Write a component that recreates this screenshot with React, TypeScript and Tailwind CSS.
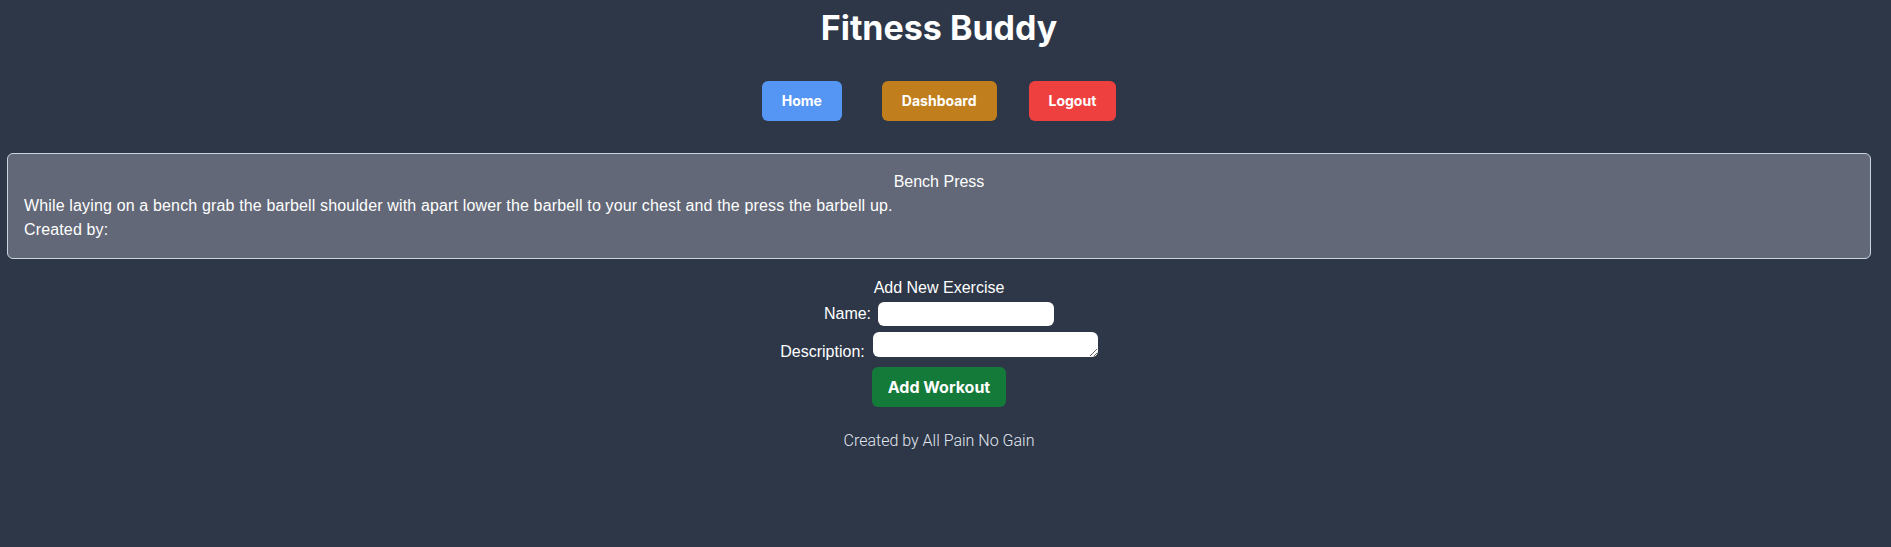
import React from 'react';

const exercises = [
  {
    name: 'Bench Press',
    description:
      'While laying on a bench grab the barbell shoulder with apart lower the barbell to your chest and the press the barbell up.',
    createdBy: '',
  },
];

export default function App() {
  return (
    <div className="min-h-screen bg-[#2d3748] text-white font-['Inter',sans-serif]">
      <div className="w-[1878px] flex flex-col items-center">
        <h1 className="mt-2 text-[34px] font-bold leading-10">Fitness Buddy</h1>

        <nav className="mt-[33px] flex items-center">
          <a className="mr-[40px] rounded-md bg-[#5596f5] px-5 py-2.5 text-sm font-bold leading-5">Home</a>
          <a className="mr-[32px] rounded-md bg-[#c07f1c] px-5 py-2.5 text-sm font-bold leading-5">Dashboard</a>
          <a className="rounded-md bg-[#ef4040] px-5 py-2.5 text-sm font-bold leading-5">Logout</a>
        </nav>

        <div className="mt-8 w-full px-[7px] font-['Liberation_Sans',Arial,sans-serif]">
          {exercises.map((ex) => (
            <div key={ex.name} className="rounded-md border border-[#cbd5e0] bg-[#626877] p-4 text-base leading-6">
              <h2 className="text-center">{ex.name}</h2>
              <p className="tracking-[0.15px]">{ex.description}</p>
              <p className="tracking-[0.15px]">Created by: {ex.createdBy}</p>
            </div>
          ))}
        </div>

        <form className="mt-[17px] flex flex-col items-center text-base leading-6">
          <h3 className="font-['Liberation_Sans',Arial,sans-serif]">Add New Exercise</h3>
          <div className="mt-[2px] flex items-center gap-[7px]">
            <label className="font-['Liberation_Sans',Arial,sans-serif]">Name:</label>
            <input type="text" className="h-6 w-[176px] rounded-md bg-white" />
          </div>
          <div className="mt-[6px] flex items-end gap-[8px]">
            <label className="font-['Liberation_Sans',Arial,sans-serif]">Description:</label>
            <textarea className="mb-[7px] h-[25px] w-[225px] rounded-md bg-white"></textarea>
          </div>
          <button type="button" className="mt-[3px] rounded-md bg-[#137a3a] px-4 py-2 font-bold">
            Add Workout
          </button>
        </form>

        <footer className="mt-[22px] font-['Roboto',sans-serif] font-light text-[#e2e8f0]">
          Created by All Pain No Gain
        </footer>
      </div>
    </div>
  );
}
